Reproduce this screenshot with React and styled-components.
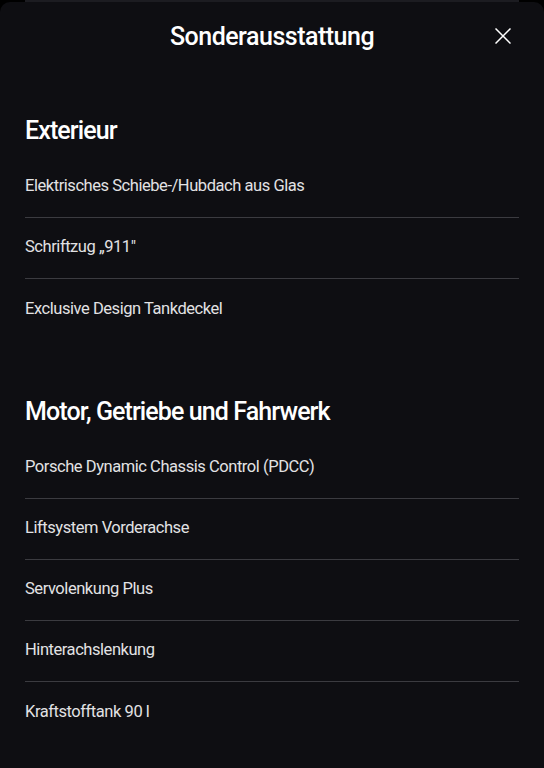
import styled, { createGlobalStyle } from "styled-components";

const GlobalStyle = createGlobalStyle`
  html, body {
    margin: 0;
    padding: 0;
    background: #000;
  }
  body {
    font-family: Roboto, "Liberation Sans", sans-serif;
    -webkit-font-smoothing: antialiased;
  }
`;

const Screen = styled.div`
  width: 544px;
  height: 768px;
  overflow: hidden;
  background: #000;
  display: flex;
  flex-direction: column;
`;

// the sheet stacked behind the open one
const BackSheet = styled.div`
  margin: 0 25px;
  height: 2px;
  background: #1c1c21;
  flex-shrink: 0;
`;

const Sheet = styled.div`
  flex: 1;
  background: #0e0e12;
  border-radius: 10px 10px 0 0;
  color: #fff;
  padding: 0 25px;
`;

const Header = styled.header`
  position: relative;
  height: 68px;
  display: flex;
  align-items: center;
  justify-content: center;
`;

const Title = styled.h1`
  margin: 0;
  font-size: 25px;
  font-weight: 500;
  letter-spacing: -0.5px;
  color: #fff;
`;

const CloseBtn = styled.button`
  position: absolute;
  right: 4px;
  top: 22px;
  width: 24px;
  height: 24px;
  padding: 0;
  border: 0;
  background: none;
  color: #fff;
  display: flex;
  align-items: center;
  justify-content: center;
`;

const Section = styled.section`
  margin-top: ${(props) => props.top || 0}px;
`;

const SectionTitle = styled.h2`
  margin: 0;
  height: 57px;
  box-sizing: border-box;
  padding-top: 4px;
  display: flex;
  align-items: center;
  font-size: 25px;
  font-weight: 500;
  letter-spacing: -0.9px;
  color: #fff;
`;

const List = styled.ul`
  list-style: none;
  margin: 0;
  padding: 0;
`;

const Item = styled.li`
  height: 61px;
  box-sizing: border-box;
  padding-bottom: 3px;
  display: flex;
  align-items: center;
  font-size: 16.5px;
  color: #e2e2e4;
  letter-spacing: -0.45px;
  border-bottom: 1px solid #3b3b40;

  &:last-child {
    border-bottom: 0;
  }
`;

const sections = [
  {
    title: "Exterieur",
    top: 30,
    items: [
      "Elektrisches Schiebe-/Hubdach aus Glas",
      "Schriftzug „911\"",
      "Exclusive Design Tankdeckel",
    ],
  },
  {
    title: "Motor, Getriebe und Fahrwerk",
    top: 41,
    items: [
      "Porsche Dynamic Chassis Control (PDCC)",
      "Liftsystem Vorderachse",
      "Servolenkung Plus",
      "Hinterachslenkung",
      "Kraftstofftank 90 l",
    ],
  },
];

export default function App() {
  return (
    <>
      <GlobalStyle />
      <Screen>
        <BackSheet />
        <Sheet>
          <Header>
            <Title>Sonderausstattung</Title>
            <CloseBtn aria-label="Schließen">
              <svg width="16" height="16" viewBox="0 0 16 16">
                <path
                  d="M0.5 0.5L15.5 15.5M15.5 0.5L0.5 15.5"
                  stroke="currentColor"
                  strokeWidth="1.5"
                  fill="none"
                />
              </svg>
            </CloseBtn>
          </Header>
          {sections.map((section) => (
            <Section top={section.top} key={section.title}>
              <SectionTitle>{section.title}</SectionTitle>
              <List>
                {section.items.map((item) => (
                  <Item key={item}>{item}</Item>
                ))}
              </List>
            </Section>
          ))}
        </Sheet>
      </Screen>
    </>
  );
}
